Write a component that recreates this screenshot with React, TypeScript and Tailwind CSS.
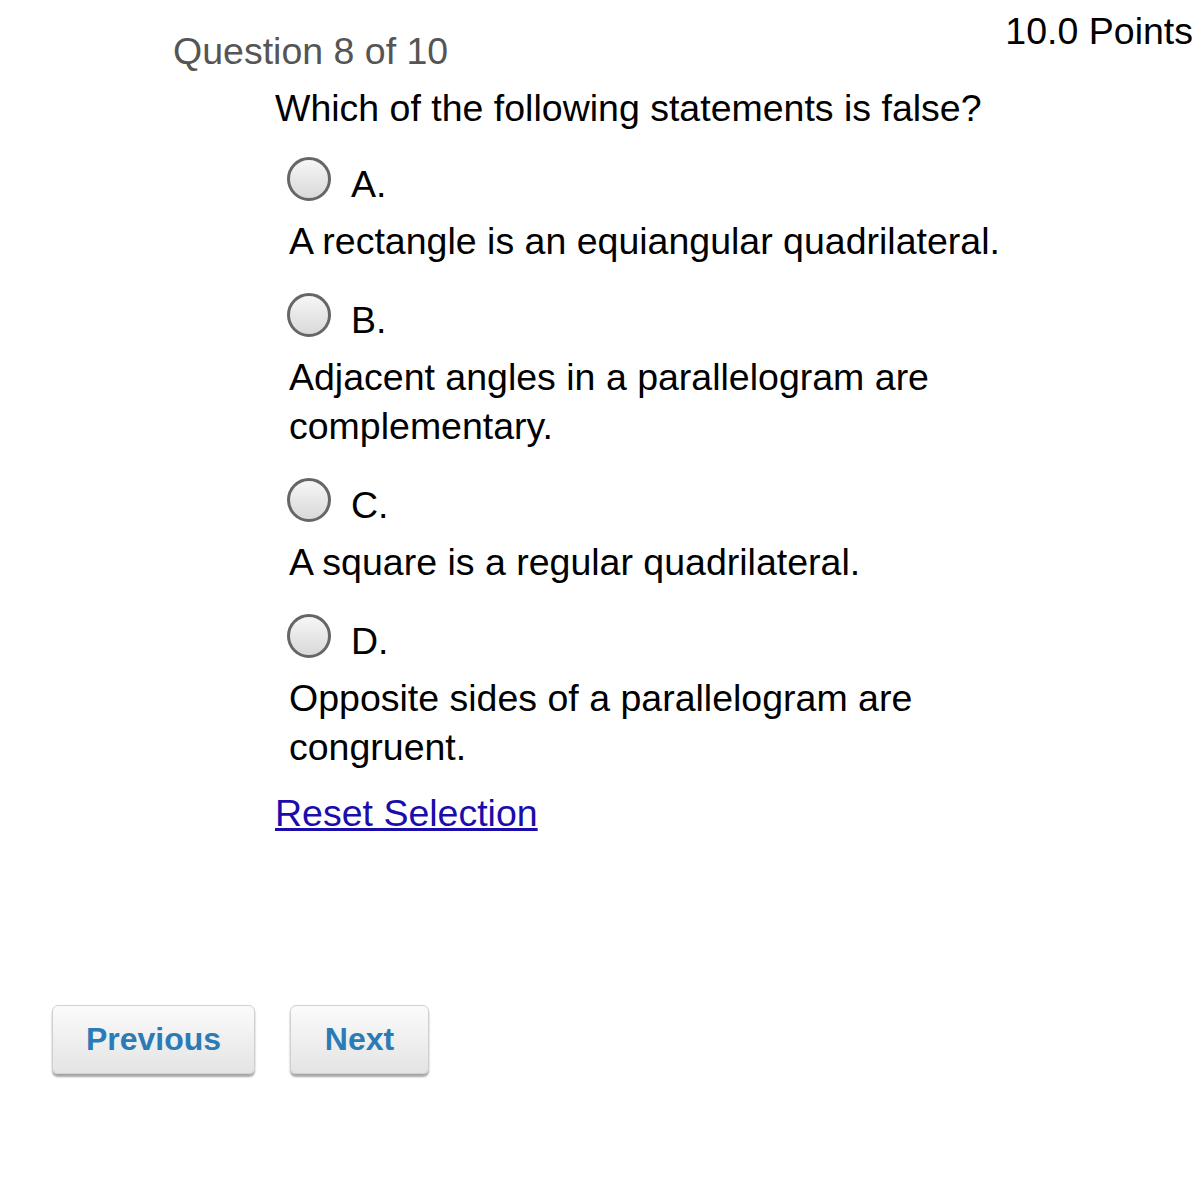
import React from "react"

const options = [
  { letter: "A.", text: "A rectangle is an equiangular quadrilateral." },
  { letter: "B.", text: "Adjacent angles in a parallelogram are complementary." },
  { letter: "C.", text: "A square is a regular quadrilateral." },
  { letter: "D.", text: "Opposite sides of a parallelogram are congruent." },
]

function Radio() {
  return (
    <span className="block h-[44px] w-[44px] shrink-0 rounded-full border-[3px] border-[#666666] bg-gradient-to-b from-[#f6f6f6] to-[#d9d9d9]" />
  )
}

function NavButton({ label, width }: { label: string; width: string }) {
  return (
    <button
      className={`${width} h-[69px] rounded-[6px] border border-[#d0d0d0] bg-gradient-to-b from-[#fbfbfb] to-[#e4e4e4] text-[32px] font-bold text-[#2b7bb6] shadow-[0_3px_2px_rgba(0,0,0,0.35)]`}
    >
      {label}
    </button>
  )
}

export default function App() {
  return (
    <div className="h-[1200px] w-[1198px] bg-white font-['Liberation_Sans',Arial,sans-serif] text-[37.5px] leading-[49px] text-black">
      <div className="flex items-start justify-between">
        <div className="pl-[173px] pt-[27px] text-[#555555]">Question 8 of 10</div>
        <div className="pr-[5px] pt-[7px]">10.0 Points</div>
      </div>

      <div className="pl-[275px] pt-[8px]">Which of the following statements is false?</div>

      <div className="flex flex-col gap-[27px] pl-[287px] pt-[24px]">
        {options.map((o) => (
          <div key={o.letter}>
            <div className="flex items-start gap-[20px]">
              <Radio />
              <span className="mt-[3px]">{o.letter}</span>
            </div>
            <p className="mt-[8px] w-[760px] pl-[2px]">{o.text}</p>
          </div>
        ))}
      </div>

      <div className="pl-[275px] pt-[17px]">
        <a href="#" className="text-[#1a0dab] underline">
          Reset Selection
        </a>
      </div>

      <div className="flex gap-[35px] pl-[52px] pt-[167px]">
        <NavButton label="Previous" width="w-[203px]" />
        <NavButton label="Next" width="w-[139px]" />
      </div>
    </div>
  )
}
